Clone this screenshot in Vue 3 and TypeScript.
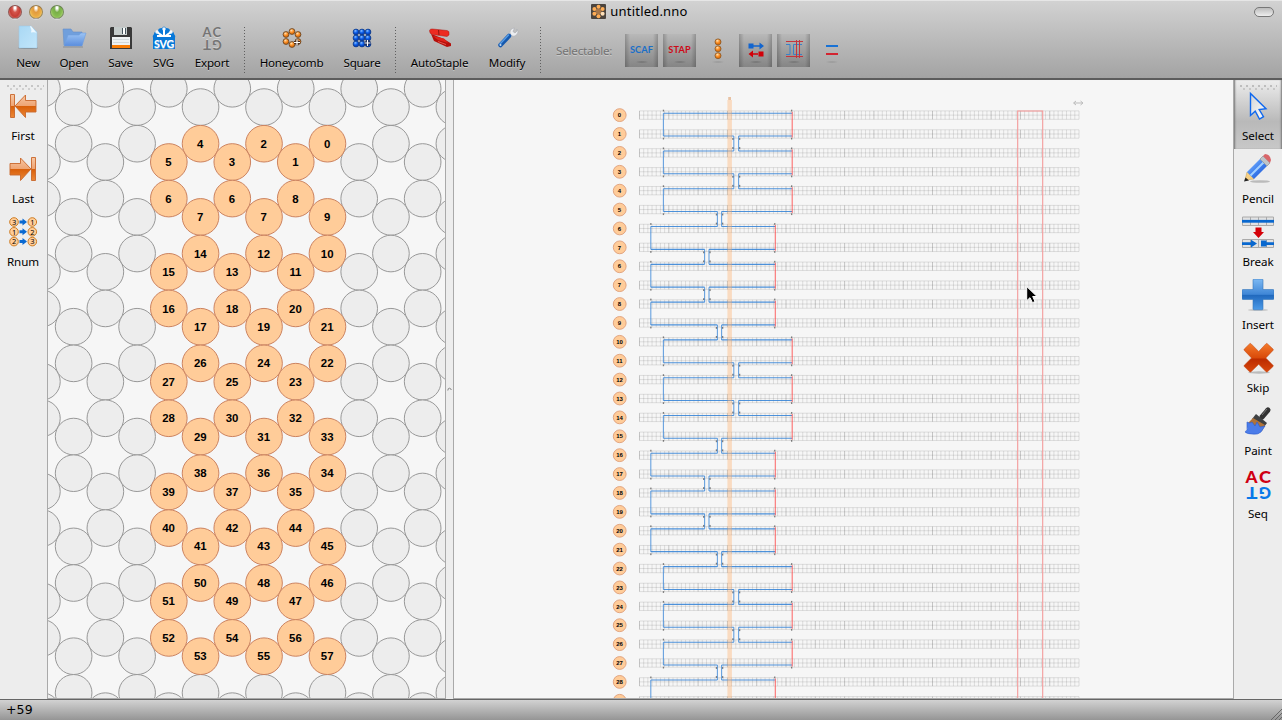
<script setup lang="ts">
interface HexCell { x: number; y: number; label: string | null }
interface Pt { x: number; y: number }

const R = 18.32
const DX = 31.73
const PERIOD = 109.83

const numbered: Record<number, number[]> = {
  4: [5, 6, 15, 16, 27, 28, 39, 40, 51, 52],
  5: [4, 7, 14, 17, 26, 29, 38, 41, 50, 53],
  6: [3, 6, 13, 18, 25, 30, 37, 42, 49, 54],
  7: [2, 7, 12, 19, 24, 31, 36, 43, 48, 55],
  8: [1, 8, 11, 20, 23, 32, 35, 44, 47, 56],
  9: [0, 9, 10, 21, 22, 33, 34, 45, 46, 57],
}

const cells: HexCell[] = []
for (let c = 0; c <= 13; c++) {
  const x = 41.9 + DX * c - 47
  const odd = c % 2 === 1
  const first = odd ? 143.7 : 162
  const gap = odd ? 73.2 : 36.6
  for (let k = -2; k < 12; k++) {
    const band = Math.floor(k / 2)
    const y = first + band * PERIOD + (k % 2 !== 0 ? gap : 0) - 80
    const list = numbered[c]
    const label = list && k >= 0 && k < 10 ? String(list[k]) : null
    cells.push({ x, y, label })
  }
}
const empty = cells.filter((c) => c.label === null)
const filled = cells.filter((c) => c.label !== null)

const OX = 454
const OY = 80
const ROW = 18.893
const CELL = 4.186
const X0 = 639.5 - OX
const rowY = (i: number): number => 115.1 - OY + ROW * i
const laneY = (i: number): number => rowY(i) + (i % 2 === 0 ? -1.9 : 2)
const ids: number[] = [0, 1, 2, 3, 4, 5, 6, 7, 6, 7]
for (let n = 8; n <= 29; n++) ids.push(n)
const VISIBLE_LABELS = 31

let minor = ''
let major = ''
ids.forEach((_, i) => {
  const y = rowY(i)
  const top = y - 4.2
  for (let k = 0; k < 3; k++) minor += `M${X0} ${top + k * 4.2}h${CELL * 105}`
  for (let k = 0; k <= 105; k++) {
    const seg = `M${(X0 + k * CELL).toFixed(2)} ${top.toFixed(2)}v8.4`
    if (k % 7 === 0 && k < 105) major += seg
    else minor += seg
  }
})

let blueH = ''
let blueV = ''
let redV = ''
const specks: Pt[] = []
const isWide = (i: number): boolean => Math.floor(i / 6) % 2 === 0
const crossing = (i: number): [number, number] => {
  if (i % 6 === 5) return [717.4 - OX, 721.6 - OX]
  return isWide(i) ? [733.8 - OX, 738.6 - OX] : [704.6 - OX, 709 - OX]
}
ids.forEach((_, i) => {
  const wide = isWide(i)
  const l = (wide ? 663.4 : 650.8) - OX
  const r = (wide ? 792.2 : 775.3) - OX
  const y = laneY(i)
  const gap = i === 0 ? null : crossing(i % 2 === 0 ? i - 1 : i)
  if (gap) blueH += `M${l} ${y}H${gap[0]}M${gap[1]} ${y}H${r}`
  else blueH += `M${l} ${y}H${r}`
  const out = i % 2 === 0 ? -1 : 1
  specks.push({ x: l, y: y + 2.6 * out }, { x: r - 0.6, y: y + 2.6 * out })
  if (i % 2 === 0) {
    blueV += `M${l} ${y}V${laneY(i + 1)}`
    redV += `M${r} ${y - 1.5}V${laneY(i + 1) + 1.5}`
  } else {
    const g = crossing(i)
    const y2 = laneY(i + 1)
    blueV += `M${g[0]} ${y}V${y2}M${g[1]} ${y}V${y2}`
    specks.push({ x: g[0] - 1, y: y + 3 }, { x: g[1] + 1, y: y + 3 })
    specks.push({ x: g[0] - 1, y: y2 - 3 }, { x: g[1] + 1, y: y2 - 3 })
  }
})

const ring: Pt[] = [
  { x: 15, y: 7 }, { x: 21, y: 10 }, { x: 21, y: 17 },
  { x: 15, y: 20 }, { x: 9, y: 17 }, { x: 9, y: 10 },
]
const grid9: Pt[] = [0, 1, 2, 3, 4, 5, 6, 7, 8].map((n) => ({ x: 9 + (n % 3) * 6, y: 7.5 + Math.floor(n / 3) * 6 }))
const renum: [number, number][] = [[3, 1], [1, 2], [2, 3]]
</script>

<template>
  <div class="window">
    <svg class="defs" width="0" height="0">
      <defs>
        <radialGradient id="ball-o" cx="40%" cy="30%"><stop offset="0" stop-color="#ffe0b0" /><stop offset=".6" stop-color="#ff9a35" /><stop offset="1" stop-color="#e77710" /></radialGradient>
        <radialGradient id="ball-b" cx="40%" cy="30%"><stop offset="0" stop-color="#8cc0ff" /><stop offset=".6" stop-color="#1468f0" /><stop offset="1" stop-color="#0648c8" /></radialGradient>
        <linearGradient id="arrow-o" x2="0" y2="1"><stop offset="0" stop-color="#f8c8a4" /><stop offset=".5" stop-color="#eea473" /><stop offset=".52" stop-color="#d9600a" /><stop offset="1" stop-color="#ec8838" /></linearGradient>
        <linearGradient id="plus-b" x2="0" y2="1"><stop offset="0" stop-color="#7db9f3" /><stop offset=".5" stop-color="#3f86d6" /><stop offset=".52" stop-color="#2068bd" /><stop offset="1" stop-color="#4c9be8" /></linearGradient>
        <linearGradient id="cross-r" x2="0" y2="1"><stop offset="0" stop-color="#f47b2c" /><stop offset=".5" stop-color="#d94a0a" /><stop offset=".55" stop-color="#bc2c00" /><stop offset="1" stop-color="#d9480c" /></linearGradient>
        <linearGradient id="folder" x2="0" y2="1"><stop offset="0" stop-color="#9cc4f4" /><stop offset="1" stop-color="#5a8ddd" /></linearGradient>
        <linearGradient id="page" x2="1" y2="1"><stop offset="0" stop-color="#a9d8f4" /><stop offset="1" stop-color="#c2e6fb" /></linearGradient>
        <linearGradient id="cursor" x2="1" y2="1"><stop offset="0" stop-color="#d4d4d4" /><stop offset="1" stop-color="#fff" /></linearGradient>
        <linearGradient id="pencil" x2="1" y2="1"><stop offset="0" stop-color="#8fc4ff" /><stop offset=".5" stop-color="#3f80ef" /><stop offset="1" stop-color="#1c4fc8" /></linearGradient>
      </defs>
    </svg>

    <header class="chrome">
      <div class="titlebar">
        <div class="lights"><i class="red" /><i class="amber" /><i class="green" /></div>
        <div class="title">
          <svg width="15" height="15" viewBox="0 0 15 15"><rect width="15" height="15" rx="1" fill="#4b443e" /><circle cx="7.5" cy="7.5" r="3" fill="#a8774a" /><g fill="#ffad55"><circle cx="7.5" cy="2.8" r="2" /><circle cx="11.6" cy="5" r="2" /><circle cx="11.6" cy="9.8" r="2" fill="#ffe0b8" /><circle cx="7.5" cy="12.2" r="2" /><circle cx="3.4" cy="9.8" r="2" /><circle cx="3.4" cy="5" r="2" /></g></svg>
          <span>untitled.nno</span>
        </div>
        <div class="pill" />
      </div>
      <div class="toolbar">
        <div class="tool w46">
          <svg width="30" height="28" viewBox="0 0 30 28"><ellipse cx="15" cy="24" rx="10" ry="1" fill="#888" /><path d="M6 2h12l6 6v16H6z" fill="url(#page)" stroke="#98c7e4" stroke-width=".5" /><path d="M17 2.500q2 3 1 6q4-1 6 1L18 2z" fill="#edf8ff" /></svg>
          <span>New</span>
        </div>
        <div class="tool w46">
          <svg width="30" height="28" viewBox="0 0 30 28"><path d="M4 5h8l2 3h9v13H5z" fill="#709fdc" stroke="#648fc9" stroke-width=".6" /><path d="M5 22 9 11h11l2-2h5l-4 13z" fill="url(#folder)" stroke="#70a0df" stroke-width=".6" /><path d="M4 23h20" stroke="#8a8e94" /></svg>
          <span>Open</span>
        </div>
        <div class="tool w47">
          <svg width="30" height="28" viewBox="0 0 30 28"><path d="M5 3h20l1 1v21H4V4z" fill="#393939" /><path d="M8 3h13v8H8z" fill="#c5cccb" /><path d="M16 4h4v6h-4z" fill="#44535b" /><path d="M17 4h2v6h-2z" fill="#fff" /><path d="M6 13h18v8H6z" fill="#eef2f3" /><path d="M7 15.500h16M7 18.500h16" stroke="#d2d9db" /><path d="M6 21h18v3H6z" fill="#f97d05" /></svg>
          <span>Save</span>
        </div>
        <div class="tool w39">
          <svg width="30" height="28" viewBox="0 0 30 28"><path d="M4 25V14q-1-2 1-4 0-3 4-3 0-3 4-3 2-3 4 0 4 0 4 3 4 0 4 3 2 2 1 4v11z" fill="#0878d8" /><g stroke="#fff" stroke-width="2"><path d="M15 13V5M15 13 8 8M15 13l7-5M15 12h-7M15 12h7" /><circle cx="15" cy="5" r=".7" /><circle cx="8" cy="8" r=".7" /><circle cx="22" cy="8" r=".7" /></g><path d="M4 13h22v12H4z" fill="#0878d8" /><text x="15" y="23.600" text-anchor="middle" textLength="20" lengthAdjust="spacingAndGlyphs" class="svg-mark">SVG</text></svg>
          <span>SVG</span>
        </div>
        <div class="tool w58">
          <svg width="30" height="28" viewBox="0 0 30 28" class="acgt gray"><text x="5.500" y="12.800">A</text><text x="15.500" y="12.800">C</text><g transform="rotate(180 15 14.200)"><text x="5.300" y="12.800">G</text><text x="16" y="12.800">T</text></g></svg>
          <span>Export</span>
        </div>
        <div class="sep w7" />
        <div class="tool w87">
          <svg width="30" height="28" viewBox="0 0 30 28"><circle v-for="(p, i) in ring" :key="i" :cx="p.x" :cy="p.y + .5" r="2.900" fill="url(#ball-o)" stroke="#5b3c21" stroke-width=".8" /><path d="M17 18.500h6M20 15.500v6" stroke="#4a3020" stroke-width="2.800" /><path d="M17 18.500h6M20 15.500v6" stroke="#fff" stroke-width="1.200" /></svg>
          <span>Honeycomb</span>
        </div>
        <div class="tool w54">
          <svg width="30" height="28" viewBox="0 0 30 28"><circle v-for="(p, i) in grid9" :key="i" :cx="p.x" :cy="p.y + .5" r="2.900" fill="url(#ball-b)" stroke="#073078" stroke-width=".7" /><path d="M17.500 19h6M20.500 16v6" stroke="#10204d" stroke-width="2.800" /><path d="M17.500 19h6M20.500 16v6" stroke="#fff" stroke-width="1.200" /></svg>
          <span>Square</span>
        </div>
        <div class="sep w13" />
        <div class="tool w75">
          <svg width="30" height="28" viewBox="0 0 30 28"><path d="m6 10 3 7 13 6 4-1v-2.500l-7-4.500-10-4z" fill="#b5100c" /><path d="M4.500 6.500q.5-2 3-1.500l14.500 1.500q2.500.5 2 3v1.500l-2 1.500-14.500-2q-3-.5-3-4z" fill="#ed2b21" stroke="#a81712" stroke-width=".5" /><path d="m8 12 11 2.500 4 4.500-10-3z" fill="#e22219" /><path d="M13 17.500l8 3" stroke="#f26a5e" stroke-width=".8" /><path d="m13.500 6 .5 5" stroke="#8e1712" /></svg>
          <span>AutoStaple</span>
        </div>
        <div class="tool w60">
          <svg width="30" height="28" viewBox="0 0 30 28"><path d="m16 13 4-4" stroke="#d9dcdf" stroke-width="4" /><path d="M25 5a4.500 4.500 0 0 1-6 6.500l-1-3q0-4 4.500-4.500L21 7.500l2 1.500 2-2z" fill="#ecedef" stroke="#a7abb1" stroke-width=".6" /><path d="m8.500 21 8.500-9" stroke="#1659ae" stroke-width="4.500" stroke-linecap="round" /><path d="m8 20 8.500-9" stroke="#579ce5" stroke-width="1.400" stroke-linecap="round" /><circle cx="8.500" cy="21" r="1" fill="#c6dcf2" /></svg>
          <span>Modify</span>
        </div>
        <div class="sep w7" />
        <div class="selectable">Selectable:</div>
        <div class="filters">
          <div class="filter on scaf">SCAF</div>
          <div class="filter on stap">STAP</div>
          <div class="filter"><svg width="33" height="33" viewBox="0 0 33 33"><circle v-for="k in 3" :key="k" cx="17" :cy="1 + k * 6.900" r="3" fill="url(#ball-o)" stroke="#875524" stroke-width=".8" /></svg></div>
          <div class="filter on"><svg width="33" height="33" viewBox="0 0 33 33"><path d="M9.500 9.500h5v5h-5zM14 11.300h6.500v-2.800L25 12l-4.500 3.500v-2.700H14z" fill="#1265cf" /><path d="M19.500 17.500h5v5h-5zM20 19.300h-6v-2.800L9.500 20l4.500 3.500v-2.700h6z" fill="#d20009" /></svg></div>
          <div class="filter on"><svg width="33" height="33" viewBox="0 0 33 33" fill="none"><path d="M9 10.500h4v10H9M25 10.500h-8.500v10H25" stroke="#3a82c8" /><path d="M9 7.500h17M9 22.500h17M19.500 6v18M22.500 6v18" stroke="#c6343c" /></svg></div>
          <div class="filter"><svg width="33" height="33" viewBox="0 0 33 33"><path d="M11 12h12" stroke="#1872d5" stroke-width="2" /><path d="M11 20h12" stroke="#d32430" stroke-width="2" /></svg></div>
        </div>
      </div>
    </header>

    <main class="body">
      <aside class="side left">
        <svg class="grip" width="37" height="6"><path d="M0 1h37" stroke="#c6c6c6" stroke-width="2" stroke-dasharray="2 4" /><path d="M3 4h34" stroke="#cfcfcf" stroke-width="2" stroke-dasharray="2 4" /></svg>
        <div class="act">
          <svg width="32" height="32" viewBox="0 0 32 32"><path d="M3.500 4.500h4v23h-4zM8 16 18.500 5v5.500H29V22H18.500v5.500z" fill="url(#arrow-o)" stroke="#c8662b" stroke-width=".9" /></svg>
          <span>First</span>
        </div>
        <div class="act">
          <svg width="32" height="32" viewBox="0 0 32 32"><path d="M24.500 4.500h4v23h-4zM24 16 13.500 5v5.500H3V22h10.500v5.500z" fill="url(#arrow-o)" stroke="#c8662b" stroke-width=".9" /></svg>
          <span>Last</span>
        </div>
        <div class="act">
          <svg width="32" height="32" viewBox="0 0 32 32" class="renum"><g v-for="(p, i) in renum" :key="i" :transform="`translate(0 ${6 + i * 9.8})`"><circle cx="7" cy="0" r="4.300" /><circle cx="25.300" cy="0" r="4.300" /><text x="7" y="2.700">{{ p[0] }}</text><text x="25.300" y="2.700">{{ p[1] }}</text><path d="M12.500-1.500h3V-3.500L20 0l-4.500 3.500v-2h-3z" fill="#0a69d1" /></g></svg>
          <span>Rnum</span>
        </div>
      </aside>

      <section class="slice">
        <svg width="397" height="618" viewBox="1 0 397 618">
          <circle v-for="(c, i) in empty" :key="'e' + i" :cx="c.x" :cy="c.y" :r="R" fill="#ededed" stroke="#989898" stroke-width="1" />
          <g v-for="(c, i) in filled" :key="'f' + i">
            <circle :cx="c.x" :cy="c.y" :r="R" fill="#ffcc99" stroke="#cc8360" stroke-width="1" />
            <text :x="c.x - .3" :y="c.y + 4.100" class="hex">{{ c.label }}</text>
          </g>
        </svg>
      </section>
      <div class="split"><svg width="5" height="5"><path d="M.8 3.500Q1 1 2.500 1.200T4.300 3" fill="none" stroke="#858585" /></svg></div>
      <section class="paths">
        <svg width="779" height="618" viewBox="0 0 779 618" fill="none">
          <path :d="minor" stroke="#000" stroke-opacity=".105" stroke-width="1" />
          <path :d="major" stroke="#000" stroke-opacity=".2" stroke-width="1" />
          <g v-for="(n, i) in ids" :key="i">
            <circle cx="165.700" :cy="rowY(i)" r="6.400" fill="#ffcc99" stroke="#e2a581" stroke-width="1" />
            <text v-if="i < VISIBLE_LABELS" x="165.500" :y="rowY(i) + 2.200" class="row-no">{{ n }}</text>
          </g>
          <rect x="563.700" y="31" width="25" height="620" stroke="#f49a9a" stroke-width="1.100" />
          <path :d="blueH" stroke="#2f80d6" stroke-opacity=".85" stroke-width="1.100" />
          <path :d="blueV" stroke="#2f80d6" stroke-opacity=".72" stroke-width="1.100" />
          <path :d="redV" stroke="#ff3030" stroke-opacity=".68" stroke-width="1.100" />
          <rect v-for="(s, i) in specks" :key="'s' + i" :x="s.x - .6" :y="s.y - .9" width="1.300" height="1.800" fill="#333" fill-opacity=".6" />
          <rect x="273.400" y="20" width="4.500" height="610" fill="#ffb573" fill-opacity=".4" />
          <rect x="274.200" y="17" width="2.800" height="3" fill="#e8c2a4" />
          <path d="M620 23h8M622 21l-2.500 2 2.500 2M626.500 21l2.500 2-2.500 2" stroke="#bbb" />
          <path d="M572.700 206.500v14.200l3.300-3 2.500 5 2.500-1.200-2.300-5h4.300z" fill="#000" stroke="#fff" stroke-width="1" />
        </svg>
      </section>

      <aside class="side right">
        <div class="act picked">
          <svg class="grip" width="37" height="6"><path d="M0 1h37" stroke="#bdbdbd" stroke-width="2" stroke-dasharray="2 4" /><path d="M3 4h34" stroke="#c6c6c6" stroke-width="2" stroke-dasharray="2 4" /></svg>
          <svg width="32" height="32" viewBox="0 0 32 32"><path d="M8.500 3.500v22l4.700-4.300 4.300 7.800 4-2.300-4.300-7.200 6.800-.8z" fill="url(#cursor)" stroke="#0f68ef" stroke-width="1.400" /></svg>
          <span>Select</span>
        </div>
        <div class="act">
          <svg width="32" height="32" viewBox="0 0 32 32"><ellipse cx="18" cy="28.500" rx="10" ry="1.300" fill="#bbb" /><path d="m3 27 2-8 7 7z" fill="#f5cf84" stroke="#c99e4f" stroke-width=".5" /><path d="m2 28.500 1.500-4 3.500 3z" fill="#222" /><path d="m5 19 13-13 7 7-13 13z" fill="url(#pencil)" /><path d="m8.500 22.500 13-13" stroke="#a4d1ff" stroke-width="2" /><path d="m18 6 3-3 7 7-3 3z" fill="#bfc4c8" stroke="#84898e" stroke-width=".6" /><path d="m21 3 2-2q5 0 6 6l-1 3z" fill="#d9666a" /></svg>
          <span>Pencil</span>
        </div>
        <div class="act">
          <svg width="32" height="32" viewBox="0 0 32 32"><g stroke="#aaa" fill="#e2e2e2"><path d="M.5 1h31v8.500H.5zM8.500 1v8.500M16.500 1v8.500M24.500 1v8.500M.5 23.500h31v8H.5zM8.500 23.500v8M16.500 23.500v8M24.500 23.500v8" /></g><path d="M0 5.300h32" stroke="#0968cf" stroke-width="2.800" /><path d="M0 27.600h13M20 27.600h12" stroke="#0968cf" stroke-width="2.800" /><path d="m9 23.800 6 3.800-6 3.800zM19 24.600h5.500v6H19z" fill="#0968cf" /><path d="M13.500 11.500h6v4.500H22L16.500 22 11 16h2.500z" fill="#d40007" /></svg>
          <span>Break</span>
        </div>
        <div class="act">
          <svg width="32" height="32" viewBox="0 0 32 32"><ellipse cx="16" cy="31" rx="10" ry="1" fill="#c6c6c6" /><path d="M11 1q0-1 1-1h8q1 0 1 1v9.500h10q1 0 1 1v8q0 1-1 1H21V30q0 .8-1 .8h-8q-1 0-1-.8v-9.500H1q-1 0-1-1v-8q0-1 1-1h10z" fill="url(#plus-b)" stroke="#3577ba" stroke-width=".6" /></svg>
          <span>Insert</span>
        </div>
        <div class="act">
          <svg width="32" height="32" viewBox="0 -1 32 32"><ellipse cx="17" cy="29.500" rx="11" ry="1.200" fill="#bbb" /><path d="m9 .7 7.700 7.800L24 .7q.7-.6 1.300 0L31 6q.6.700 0 1.400L23.800 15l7.200 7.200q.6.700 0 1.300l-5.500 5.300q-.7.600-1.400 0l-7.400-7.500L9 28.800q-.7.600-1.400 0L2.300 23.500q-.6-.6 0-1.300L9.500 15 2.300 7.400q-.6-.7 0-1.400L7.700.7q.6-.6 1.300 0z" fill="url(#cross-r)" stroke="#bf4512" stroke-width=".5" /></svg>
          <span>Skip</span>
        </div>
        <div class="act">
          <svg width="32" height="32" viewBox="0 0 32 32"><path d="m20 12 6-7" stroke="#333" stroke-width="5" stroke-linecap="round" /><path d="m20 10 5-6" stroke="#777" stroke-width="1" /><path d="m14 9 11 9-3 4-12-8z" fill="#3f4143" /><path d="m11 13 12 7-3 6-14-8z" fill="#b07338" /><path d="M5 17q3 2 5 0l3 4 2-4 3 5 5-1-4 6q-3 3-9 2-5 0-7-2 3-2 2-5z" fill="#4b7ce9" stroke="#2c5cce" stroke-width=".6" /></svg>
          <span>Paint</span>
        </div>
        <div class="act">
          <svg width="32" height="32" viewBox="0 0 32 32" class="acgt big"><text x="3.500" y="15" textLength="12" lengthAdjust="spacingAndGlyphs" fill="#cf0012">A</text><text x="17" y="15" textLength="12" lengthAdjust="spacingAndGlyphs" fill="#cf0012">C</text><g transform="rotate(180 16.300 16.800)"><text x="3.500" y="15" textLength="12" lengthAdjust="spacingAndGlyphs" fill="#0878e8">G</text><text x="17" y="15" textLength="11" lengthAdjust="spacingAndGlyphs" fill="#0878e8">T</text></g></svg>
          <span>Seq</span>
        </div>
      </aside>
    </main>

    <footer class="status"><span>+59</span><svg width="12" height="12"><path d="m1 12 11-11M5 12l7-7M9 12l3-3" stroke="#666" /></svg></footer>
  </div>
</template>

<style scoped>
.window { width: 1282px; height: 720px; display: flex; flex-direction: column; overflow: hidden; background: #ededed; color: #000; font: 11.600px/16px "Noto Sans", "Open Sans", sans-serif; letter-spacing: -.2px; }
.window svg { display: block; flex: none; }
.window .defs { position: absolute; }
.chrome { height: 80px; box-sizing: border-box; background: linear-gradient(#d2d2d2, #a3a3a3); border-bottom: 2px solid #5c5c5c; border-top: 1px solid #e6e6e6; }
.titlebar { height: 21px; display: grid; grid-template-columns: 1fr auto 1fr; align-items: center; padding: 0 8px; }
.lights { display: flex; gap: 7px; }
.lights i { width: 14px; height: 14px; box-sizing: border-box; border-radius: 50%; border: 1px solid #5558; box-shadow: 0 1px #e6e6e688; }
.red { background: radial-gradient(ellipse at 50% 15%, #fff 0 8%, #d5564c 32%, #c53e35 60%, #f3a49e 100%); }
.amber { background: radial-gradient(ellipse at 50% 15%, #fff 0 8%, #e19a3e 32%, #eaac45 60%, #fbe484 100%); }
.green { background: radial-gradient(ellipse at 50% 15%, #fff 0 8%, #78ae49 32%, #86bd50 60%, #cce897 100%); }
.title { display: flex; align-items: center; gap: 4px; font-size: 13px; letter-spacing: .2px; margin-right: 3px; }
.title span { margin-top: -2px; }
.pill { justify-self: end; margin-right: 0; width: 20px; height: 10px; box-sizing: border-box; border: 1px solid #777; border-radius: 5px; background: linear-gradient(#bcbcbc, #eee); }
.toolbar { display: flex; height: 56px; padding-left: 5px; }
.tool { display: flex; flex-direction: column; align-items: center; padding-top: 2px; text-shadow: 0 1px #ffffff66; }
.tool span { margin-top: 3px; white-space: nowrap; }
.w7 { width: 7px; } .w13 { width: 13px; } .w39 { width: 39px; } .w46 { width: 46px; } .w47 { width: 47px; }
.w54 { width: 54px; } .w58 { width: 58px; } .w60 { width: 60px; } .w75 { width: 75px; } .w87 { width: 87px; }
.sep { background: repeating-linear-gradient(#606060 0 1px, transparent 1px 3px) center / 1px 46px no-repeat; margin-top: 4px; height: 48px; }
.svg-mark { font: bold 11px Lato, sans-serif; fill: #fff; }
.acgt text { font: bold 13px Lato, sans-serif; letter-spacing: 0; }
.gray { fill: #747474; }
.acgt.big text { font: 900 17px Lato, sans-serif; }
.selectable { width: 57px; margin: 21px 12px 0; color: #737373; text-shadow: 0 1px #ffffff55; white-space: nowrap; }
.filters { display: flex; gap: 5px; margin-top: 12px; }
.filter { width: 33px; height: 33px; display: flex; justify-content: center; font: bold 9.200px/31px Lato, sans-serif; letter-spacing: .1px; background: radial-gradient(ellipse at 50% 50%, #7778, transparent 70%) 50% 27px / 14px 2px no-repeat; }
.filter.on { background: radial-gradient(ellipse at 50% 50%, #555a, transparent 70%) 50% 27px / 14px 2px no-repeat, linear-gradient(90deg, #0003, transparent 5px calc(100% - 5px), #0003), linear-gradient(#b8b8b8, #858585); }
.scaf { color: #1a6fc8; } .stap { color: #cd0a18; }
.body { height: 619px; display: flex; }
.side { flex: none; display: flex; flex-direction: column; background: #ededed; box-sizing: border-box; letter-spacing: -.05px; }
.left { width: 47px; padding-top: 5px; }
.left > .grip { margin: 0 0 -1px 7px; }
.right { width: 49px; border-left: 1px solid #aaa; }
.act { height: 63px; display: flex; flex-direction: column; align-items: center; flex: none; }
.act span { margin-top: 6px; }
.left .act { width: 46px; }
.right .act { padding-top: 4px; height: 59px; }
.right .picked { padding-top: 5px; height: 64px; background: linear-gradient(#ededed, #b9b9b9 60%, #c8c8c8); box-shadow: inset 2px 0 2px -1px #777, inset -2px 0 2px -1px #777; }
.picked .grip { margin-bottom: -1px; }
.renum circle { fill: #ffcd98; stroke: #cf7d23; stroke-width: 1; }
.renum text { font: 7.500px "Noto Sans", sans-serif; text-anchor: middle; }
.slice { width: 399px; height: 619px; box-sizing: border-box; border: 1px solid #a9a9a9; border-top: 0; background: #f6f6f6; overflow: hidden; }
.hex { font: bold 11.400px "Liberation Sans", Arial, sans-serif; text-anchor: middle; letter-spacing: 0; }
.split { width: 7px; display: flex; align-items: center; justify-content: center; background: #ededed; }
.paths { width: 780px; height: 619px; box-sizing: border-box; border-left: 1px solid #a9a9a9; border-bottom: 1px solid #a9a9a9; background: #f6f6f6; overflow: hidden; }
.row-no { font: bold 6px "Liberation Sans", Arial, sans-serif; text-anchor: middle; fill: #000; letter-spacing: 0; }
.status { height: 21px; box-sizing: border-box; border-top: 1px solid #666; background: linear-gradient(#d2d2d2, #959595); display: flex; justify-content: space-between; align-items: flex-end; padding-left: 6px; font: 12.500px/20px "DejaVu Sans", sans-serif; letter-spacing: .1px; }
</style>

<style>
html, body { margin: 0; overflow: hidden; }
</style>
